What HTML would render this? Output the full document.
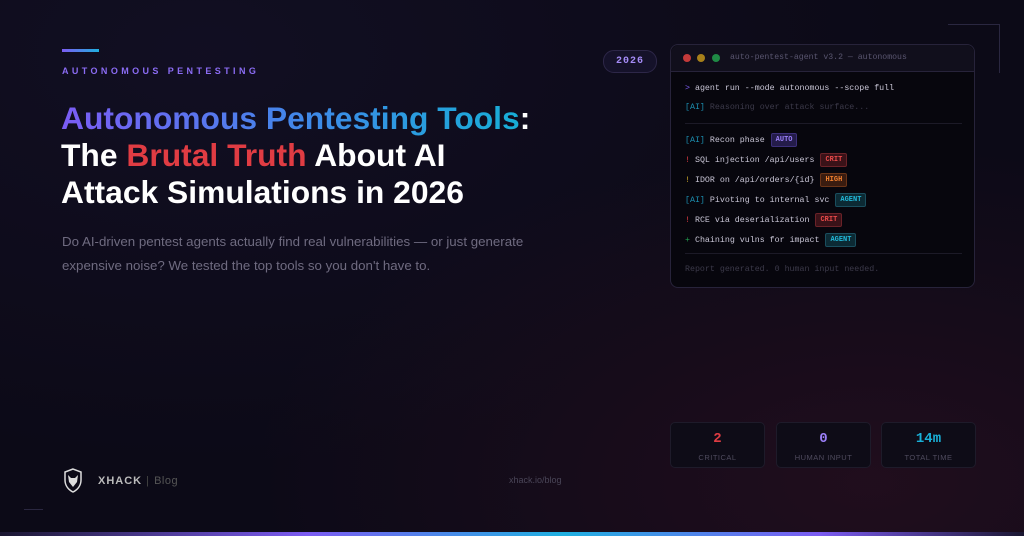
<html><head><style>
body{margin:0;width:1024px;height:536px;overflow:hidden;background:#0c0a17;font-family:"Liberation Sans",sans-serif;position:relative}
.bg{position:absolute;inset:0;background:radial-gradient(ellipse at 85% 90%,rgba(70,20,40,.35),transparent 50%),radial-gradient(ellipse at 20% 10%,rgba(30,25,60,.3),transparent 60%);}
.a{position:absolute}
.mono{font-family:"Liberation Mono",monospace}
.term{left:670px;top:44px;width:305px;height:244px;border:1px solid #27233a;border-radius:8px;background:#07060d;box-sizing:border-box}
.th{height:26px;border-bottom:1px solid #27233a;background:#110f1c;border-radius:8px 8px 0 0;position:relative}
.dot{position:absolute;top:9px;width:8px;height:8px;border-radius:50%}
.ln{position:absolute;left:14px;font-size:8.3px;color:#c9c6d6;white-space:nowrap}
.tag{display:inline-block;font-size:7px;font-weight:bold;padding:2px 4px;border-radius:2px;margin-left:6px;vertical-align:1px}
.st{position:absolute;top:422px;width:95px;height:46px;border:1px solid #1e1b2a;border-radius:5px;background:#0e0c17;text-align:center;box-sizing:border-box}
.st b{display:block;font-family:"Liberation Mono",monospace;font-size:14px;margin-top:8px}
.st span{display:block;font-size:7.5px;color:#4f4b5e;letter-spacing:.5px;margin-top:6px}
</style></head><body>
<div class="bg"></div>
<div class="a" style="left:62px;top:49px;width:37px;height:3px;background:linear-gradient(90deg,#7c5cf2,#1fb0e0)"></div>
<div class="a" style="left:62px;top:66px;font-size:9px;font-weight:bold;letter-spacing:3.4px;color:#8b6cf4">AUTONOMOUS PENTESTING</div>
<div class="a" style="left:61px;top:100px;font-size:31.8px;font-weight:bold;line-height:37px;color:#fff;white-space:nowrap;letter-spacing:0">
<span style="background:linear-gradient(90deg,#7b5cf5,#3e8ae8 55%,#17aed6);-webkit-background-clip:text;color:transparent">Autonomous Pentesting Tools</span>:<br>The <span style="color:#e03c43">Brutal Truth</span> About AI<br>Attack Simulations in 2026</div>
<div class="a" style="left:62px;top:230px;font-size:13.3px;line-height:24px;color:#6f6b80;white-space:nowrap">Do AI-driven pentest agents actually find real vulnerabilities — or just generate<br>expensive noise? We tested the top tools so you don't have to.</div>
<div class="a mono" style="left:603px;top:50px;width:52px;height:21px;border:1px solid #2d2748;border-radius:11px;background:#15122a;color:#a58cf7;font-size:10px;font-weight:bold;text-align:center;line-height:21px;letter-spacing:1px">2026</div>
<div class="a" style="left:948px;top:24px;width:51px;height:48px;border-top:1px solid #2a2740;border-right:1px solid #2a2740"></div>
<div class="a term mono">
<div class="th"><div class="dot" style="left:12px;background:#c33a3a"></div><div class="dot" style="left:26px;background:#a7801a"></div><div class="dot" style="left:41px;background:#1f8a45"></div><div style="position:absolute;left:59px;top:8px;font-size:8.2px;color:#5a5670">auto-pentest-agent v3.2 — autonomous</div></div>
<div class="ln" style="top:39px"><span style="color:#7c5cf2">&gt;</span> agent run --mode autonomous --scope full</div>
<div class="ln" style="top:58px;color:#3c3a4a"><span style="color:#1c8fb0">[AI]</span> Reasoning over attack surface...</div>
<div class="a" style="left:14px;top:78px;width:277px;height:1px;background:#1c1a27"></div>
<div class="ln" style="top:88px"><span style="color:#1c8fb0">[AI]</span> Recon phase<span class="tag" style="color:#9b7ff8;background:#241c4a;border:1px solid #3c2f7a">AUTO</span></div>
<div class="ln" style="top:108px"><span style="color:#e03c43">!</span> SQL injection /api/users<span class="tag" style="color:#e84a4a;background:#3a1218;border:1px solid #6a2228">CRIT</span></div>
<div class="ln" style="top:128px"><span style="color:#c9a52a">!</span> IDOR on /api/orders/{id}<span class="tag" style="color:#f08030;background:#3a1c10;border:1px solid #6a3418">HIGH</span></div>
<div class="ln" style="top:148px"><span style="color:#1c8fb0">[AI]</span> Pivoting to internal svc<span class="tag" style="color:#22b8d8;background:#0c2a34;border:1px solid #1a4e5e">AGENT</span></div>
<div class="ln" style="top:168px"><span style="color:#e03c43">!</span> RCE via deserialization<span class="tag" style="color:#e84a4a;background:#3a1218;border:1px solid #6a2228">CRIT</span></div>
<div class="ln" style="top:188px"><span style="color:#22a050">+</span> Chaining vulns for impact<span class="tag" style="color:#22b8d8;background:#0c2a34;border:1px solid #1a4e5e">AGENT</span></div>
<div class="a" style="left:14px;top:208px;width:277px;height:1px;background:#1c1a27"></div>
<div class="ln" style="top:220px;color:#3c3a4a">Report generated. 0 human input needed.</div>
</div>
<div class="st" style="left:670px"><b style="color:#e03c43">2</b><span>CRITICAL</span></div>
<div class="st" style="left:776px"><b style="color:#9b7ff8">0</b><span>HUMAN INPUT</span></div>
<div class="st" style="left:881px"><b style="color:#19b0d8">14m</b><span>TOTAL TIME</span></div>
<svg class="a" style="left:63px;top:468px" width="20" height="25" viewBox="0 0 20 25"><path d="M10 1L2 4v8c0 6 4 10 8 12 4-2 8-6 8-12V4z" fill="none" stroke="#ddd" stroke-width="1.5"/><path d="M5 7l3 3h4l3-3-1 7-4 5-4-5z" fill="#ddd"/></svg>
<div class="a" style="left:98px;top:475px;font-size:11px;font-weight:bold;letter-spacing:1px;color:#bbb">XHACK <span style="color:#444;font-weight:normal">|</span> <span style="color:#555;font-weight:normal;letter-spacing:.5px">Blog</span></div>
<div class="a" style="left:509px;top:475px;font-size:9px;color:#4a4658">xhack.io/blog</div>
<div class="a" style="left:24px;top:509px;width:19px;height:1px;background:#2a2740"></div>
<div class="a" style="left:0;top:532px;width:1024px;height:4px;background:linear-gradient(90deg,#1a1630,#7c5cf2 30%,#1fb0e0 55%,#7c5cf2 80%,#1a1630)"></div>
</body></html>
